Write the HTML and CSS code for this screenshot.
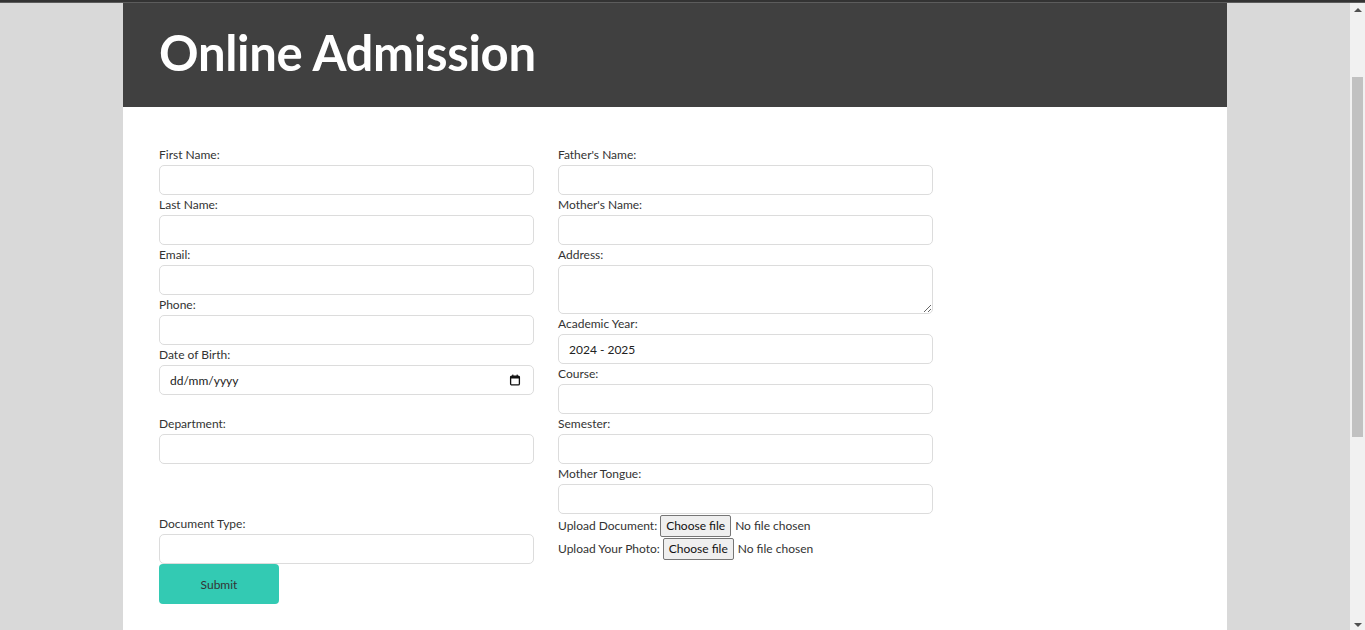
FILE: index.html
```html
<!DOCTYPE html>
<html lang="en">
<head>
<meta charset="utf-8">
<title>Online Admission</title>
<link rel="stylesheet" href="styles.css">
</head>
<body>
<div class="topline"></div>
<div class="window">
  <div class="viewport">
    <div class="page">
      <header class="hero"><h1>Online Admission</h1></header>
      <main class="form-wrap">
        <form class="form">
          <div class="col">
            <div class="field"><label>First Name:</label><input type="text" class="input"></div>
            <div class="field"><label>Last Name:</label><input type="text" class="input"></div>
            <div class="field"><label>Email:</label><input type="email" class="input"></div>
            <div class="field"><label>Phone:</label><input type="tel" class="input"></div>
            <div class="field"><label>Date of Birth:</label>
              <div class="date-wrap">
                <input type="text" class="input date-input" placeholder="dd/mm/yyyy">
                <svg class="cal-icon" width="12" height="12" viewBox="0 0 12 12" aria-hidden="true">
                  <rect x="1.6" y="2.1" width="8.8" height="8.8" rx="1.2" fill="none" stroke="#111" stroke-width="1.3"/>
                  <rect x="1.6" y="2.1" width="8.8" height="2.4" fill="#111"/>
                  <rect x="3.2" y="0.6" width="1.2" height="2" fill="#111"/>
                  <rect x="7.6" y="0.6" width="1.2" height="2" fill="#111"/>
                </svg>
              </div>
            </div>
            <div class="field field-dept"><label>Department:</label><input type="text" class="input"></div>
            <div class="field field-doc"><label>Document Type:</label><input type="text" class="input"></div>
            <button type="submit" class="submit">Submit</button>
          </div>
          <div class="col">
            <div class="field"><label>Father's Name:</label><input type="text" class="input"></div>
            <div class="field"><label>Mother's Name:</label><input type="text" class="input"></div>
            <div class="field"><label>Address:</label><textarea class="input textarea"></textarea></div>
            <div class="field"><label>Academic Year:</label><input type="text" class="input" value="2024 - 2025" readonly></div>
            <div class="field"><label>Course:</label><input type="text" class="input"></div>
            <div class="field"><label>Semester:</label><input type="text" class="input"></div>
            <div class="field"><label>Mother Tongue:</label><input type="text" class="input"></div>
            <div class="file-row"><span>Upload Document:</span><button type="button" class="file-btn">Choose file</button><span class="file-name">No file chosen</span></div>
            <div class="file-row"><span>Upload Your Photo:</span><button type="button" class="file-btn">Choose file</button><span class="file-name">No file chosen</span></div>
          </div>
        </form>
      </main>
    </div>
  </div>
  <div class="scrollbar" aria-hidden="true">
    <div class="sb-btn"><span class="arrow-up"></span></div>
    <div class="sb-thumb"></div>
    <div class="sb-btn sb-btn-down"><span class="arrow-down"></span></div>
  </div>
</div>
</body>
</html>
```
FILE: styles.css
```css
html, body {
  margin: 0;
  padding: 0;
  height: 100%;
  overflow: hidden;
}
body {
  display: flex;
  flex-direction: column;
  background: #d9d9d9;
  font-family: Lato, "Liberation Sans", sans-serif;
  font-size: 12px;
  color: #333;
}
.topline {
  flex: none;
  height: 2px;
  background: #333;
  border-bottom: 1px solid #5c5c5c;
}
.window {
  flex: 1;
  min-height: 0;
  display: flex;
}
.viewport {
  flex: 1;
  min-width: 0;
  overflow: hidden;
}
.scrollbar {
  flex: none;
  width: 15px;
  background: #f1f1f1;
  display: flex;
  flex-direction: column;
}
.sb-btn {
  height: 15px;
  display: flex;
  align-items: center;
  justify-content: center;
}
.sb-btn-down {
  margin-top: auto;
}
.arrow-up {
  width: 0;
  height: 0;
  border-left: 4px solid transparent;
  border-right: 4px solid transparent;
  border-bottom: 4px solid #505050;
  margin-bottom: 2px;
}
.arrow-down {
  width: 0;
  height: 0;
  border-left: 4px solid transparent;
  border-right: 4px solid transparent;
  border-top: 4px solid #505050;
  margin-top: 4px;
}
.sb-thumb {
  height: 360px;
  margin: 59px 2px 0;
  background: #c1c1c1;
}
.page {
  width: 1104px;
  margin: 0 auto;
  background: #fff;
}
.hero {
  background: #404040;
  height: 104px;
  box-sizing: border-box;
  padding: 0 36px 6px;
  display: flex;
  align-items: center;
}
.hero h1 {
  margin: 0;
  color: #fff;
  font-size: 49px;
  font-weight: 700;
  letter-spacing: -0.3px;
}
.form-wrap {
  padding: 38px 36px 60px;
}
.form {
  display: flex;
  gap: 24px;
}
.col {
  width: 375px;
  display: flex;
  flex-direction: column;
}
.field label {
  display: block;
  line-height: 20px;
  height: 20px;
}
.input {
  display: block;
  box-sizing: border-box;
  width: 375px;
  height: 30px;
  margin: 0;
  padding: 0 10px;
  border: 1px solid #dcdcdc;
  border-radius: 5px;
  font-family: inherit;
  font-size: 12px;
  color: #222;
  background: #fff;
}
.textarea {
  height: 49px;
  resize: vertical;
  padding: 6px 10px;
}
.date-wrap {
  position: relative;
}
.date-input::placeholder {
  color: #222;
  opacity: 1;
}
.cal-icon {
  position: absolute;
  right: 13px;
  top: 9px;
}
.field-dept {
  margin-top: 19px;
}
.field-doc {
  margin-top: 50px;
}
.submit {
  width: 120px;
  height: 40px;
  border: none;
  border-radius: 4px;
  background: #33cab3;
  color: #333;
  font-family: inherit;
  font-size: 12px;
  cursor: pointer;
}
.file-row {
  display: flex;
  align-items: center;
  height: 23px;
}
.file-btn {
  margin-left: 3px;
  height: 22px;
  padding: 0 5px;
  background: #efefef;
  border: 1px solid #767676;
  border-radius: 2px;
  font-family: inherit;
  font-size: 12px;
  color: #111;
}
.file-name {
  margin-left: 4px;
}
```
